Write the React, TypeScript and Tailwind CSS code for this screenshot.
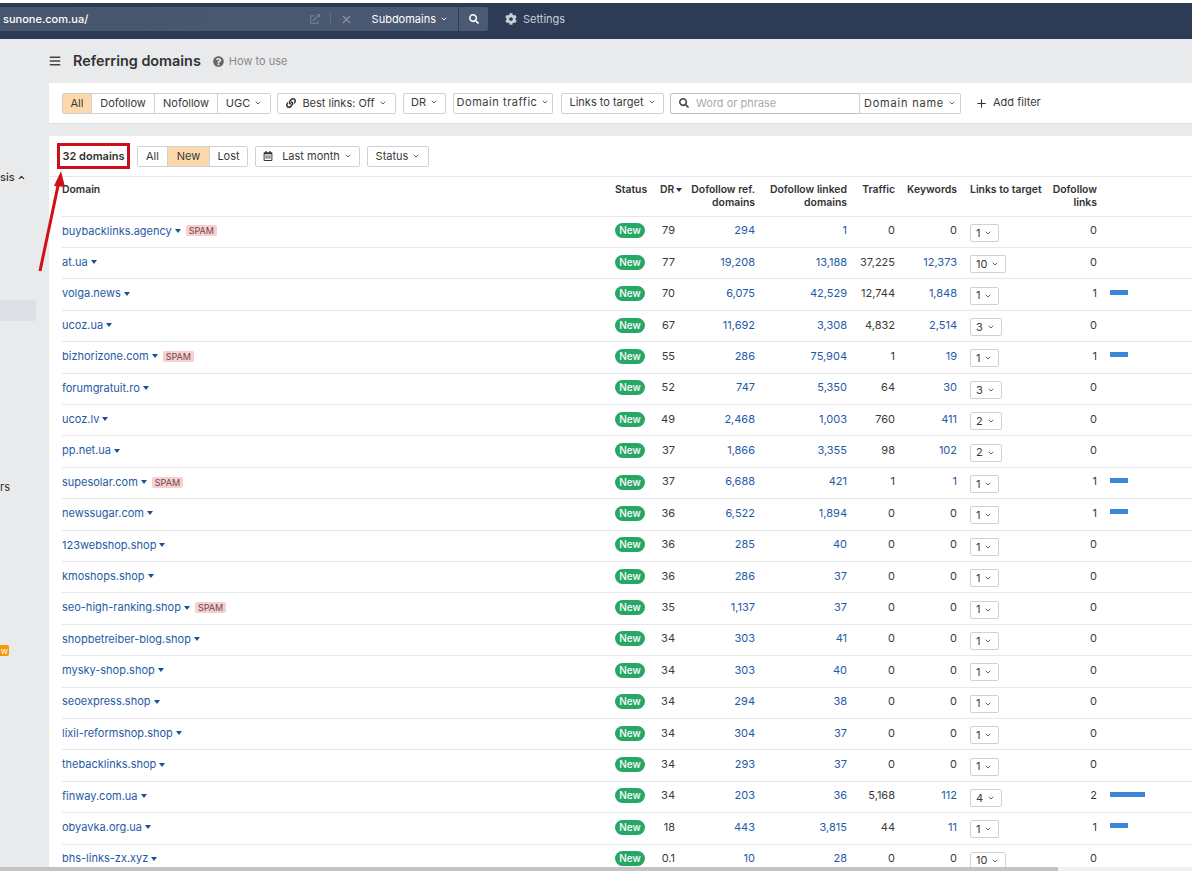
import { ChevronDown, ChevronUp, X, Plus } from "lucide-react";
import { FaCog, FaSearch, FaLink, FaRegCalendarAlt, FaQuestionCircle, FaBars, FaExternalLinkAlt } from "react-icons/fa";

const sans = "font-['Inter','Liberation_Sans',sans-serif]";

type Row = {
  domain: string;
  spam?: boolean;
  dr: string;
  ref: string;
  linked: string;
  traffic: string;
  keywords: string;
  links: string;
  dofollow: string;
  bar?: number;
};

const rows: Row[] = [
  { domain: "buybacklinks.agency", spam: true, dr: "79", ref: "294", linked: "1", traffic: "0", keywords: "0", links: "1", dofollow: "0" },
  { domain: "at.ua", dr: "77", ref: "19,208", linked: "13,188", traffic: "37,225", keywords: "12,373", links: "10", dofollow: "0" },
  { domain: "volga.news", dr: "70", ref: "6,075", linked: "42,529", traffic: "12,744", keywords: "1,848", links: "1", dofollow: "1", bar: 18 },
  { domain: "ucoz.ua", dr: "67", ref: "11,692", linked: "3,308", traffic: "4,832", keywords: "2,514", links: "3", dofollow: "0" },
  { domain: "bizhorizone.com", spam: true, dr: "55", ref: "286", linked: "75,904", traffic: "1", keywords: "19", links: "1", dofollow: "1", bar: 18 },
  { domain: "forumgratuit.ro", dr: "52", ref: "747", linked: "5,350", traffic: "64", keywords: "30", links: "3", dofollow: "0" },
  { domain: "ucoz.lv", dr: "49", ref: "2,468", linked: "1,003", traffic: "760", keywords: "411", links: "2", dofollow: "0" },
  { domain: "pp.net.ua", dr: "37", ref: "1,866", linked: "3,355", traffic: "98", keywords: "102", links: "2", dofollow: "0" },
  { domain: "supesolar.com", spam: true, dr: "37", ref: "6,688", linked: "421", traffic: "1", keywords: "1", links: "1", dofollow: "1", bar: 18 },
  { domain: "newssugar.com", dr: "36", ref: "6,522", linked: "1,894", traffic: "0", keywords: "0", links: "1", dofollow: "1", bar: 18 },
  { domain: "123webshop.shop", dr: "36", ref: "285", linked: "40", traffic: "0", keywords: "0", links: "1", dofollow: "0" },
  { domain: "kmoshops.shop", dr: "36", ref: "286", linked: "37", traffic: "0", keywords: "0", links: "1", dofollow: "0" },
  { domain: "seo-high-ranking.shop", spam: true, dr: "35", ref: "1,137", linked: "37", traffic: "0", keywords: "0", links: "1", dofollow: "0" },
  { domain: "shopbetreiber-blog.shop", dr: "34", ref: "303", linked: "41", traffic: "0", keywords: "0", links: "1", dofollow: "0" },
  { domain: "mysky-shop.shop", dr: "34", ref: "303", linked: "40", traffic: "0", keywords: "0", links: "1", dofollow: "0" },
  { domain: "seoexpress.shop", dr: "34", ref: "294", linked: "38", traffic: "0", keywords: "0", links: "1", dofollow: "0" },
  { domain: "lixil-reformshop.shop", dr: "34", ref: "304", linked: "37", traffic: "0", keywords: "0", links: "1", dofollow: "0" },
  { domain: "thebacklinks.shop", dr: "34", ref: "293", linked: "37", traffic: "0", keywords: "0", links: "1", dofollow: "0" },
  { domain: "finway.com.ua", dr: "34", ref: "203", linked: "36", traffic: "5,168", keywords: "112", links: "4", dofollow: "2", bar: 35 },
  { domain: "obyavka.org.ua", dr: "18", ref: "443", linked: "3,815", traffic: "44", keywords: "11", links: "1", dofollow: "1", bar: 18 },
  { domain: "bhs-links-zx.xyz", dr: "0.1", ref: "10", linked: "28", traffic: "0", keywords: "0", links: "10", dofollow: "0" },
];

const gridCols = "grid grid-cols-[553px_45px_22px_73px_92px_48px_62px_93px_47px_1fr]";

function Chevron() {
  return <ChevronDown size={8} strokeWidth={2.75} className="shrink-0 text-[#555]" />;
}

function Caret() {
  return <span className="ml-[3px] inline-block h-0 w-0 border-x-[3px] border-t-[4px] border-x-transparent border-t-[#1c4f96] align-middle" />;
}

function FilterButton({ children, className = "" }: { children: React.ReactNode; className?: string }) {
  return (
    <button className={`flex h-[21px] items-center justify-center gap-[4px] rounded-[2px] border border-[#cfd1d4] bg-white text-[11px] text-[#3a3a3a] ${className}`}>
      {children}
      <Chevron />
    </button>
  );
}

function SegButton({ children, active, className = "" }: { children: React.ReactNode; active?: boolean; className?: string }) {
  return (
    <span className={`flex h-full items-center justify-center border-r border-[#cfd1d4] last:border-r-0 ${active ? "bg-[#fcd9ab]" : "bg-white"} ${className}`}>
      {children}
    </span>
  );
}

function TableRow({ row }: { row: Row }) {
  return (
    <div className={`${gridCols} h-[31.4px] items-center border-b border-[#e6e7e9] text-[11px] text-[#3a3a3a]`}>
      <div className="flex items-center pb-[2px]">
        <a className="text-[#1f5aa6]">{row.domain}</a>
        <Caret />
        {row.spam && <span className="ml-[5px] rounded-[2px] bg-[#f8cfcf] px-[3px] text-[9px] leading-[11px] text-[#6b4a4a]">SPAM</span>}
      </div>
      <div className="pb-[2px]">
        <span className="flex h-[15px] w-[30px] items-center justify-center rounded-full bg-[#27a765] text-[10px] font-medium text-white">New</span>
      </div>
      <div className="w-[15px] pb-[2.6px] text-right">{row.dr}</div>
      <div className="pb-[2.6px] text-right text-[#1f5aa6]">{row.ref}</div>
      <div className="pb-[2.6px] text-right text-[#1f5aa6]">{row.linked}</div>
      <div className="pb-[2.6px] text-right">{row.traffic}</div>
      <div className={`pb-[2.6px] text-right ${row.keywords === "0" ? "" : "text-[#1f5aa6]"}`}>{row.keywords}</div>
      <div className="pl-[13px] pt-[2px]">
        <span className="inline-flex h-[18px] items-center gap-[4px] rounded-[2px] border border-[#cfd1d4] bg-white pl-[5px] pr-[6px]">
          {row.links}
          <Chevron />
        </span>
      </div>
      <div className="pb-[2.6px] text-right">{row.dofollow}</div>
      <div className="pl-[13px]">
        {row.bar ? <div className="mb-[5px] h-[5px] bg-[#3a86d8]" style={{ width: row.bar }} /> : null}
      </div>
    </div>
  );
}

export default function App() {
  return (
    <div className={`relative flex h-[871px] w-[1192px] flex-col overflow-hidden bg-[#e9eaec] ${sans}`}>
      <div className="h-[3px] shrink-0 bg-white" />

      {/* top bar */}
      <header className="flex h-[36px] shrink-0 items-start bg-[#2d3b55] pt-[4px]">
        <div className="flex h-[24px] w-[458px] items-center bg-gradient-to-r from-[#47556d] to-[#4b5a72] pl-[3px] text-[11px] font-medium text-white">
          <span className="flex-1">sunone.com.ua/</span>
          <FaExternalLinkAlt size={10} className="mr-[10px] text-[#6f7d94]" />
          <span className="mr-[9px] h-[12px] w-px bg-[#5f6d84]" />
          <X size={13} className="mr-[19px] text-[#8c97a8]" />
          <span className="flex items-center gap-[4px] pr-[10px] text-[11px] font-normal">
            Subdomains
            <ChevronDown size={8} strokeWidth={2.75} />
          </span>
        </div>
        <div className="ml-px flex h-[24px] w-[29px] items-center justify-center rounded-r-[2px] bg-[#4b5a72]">
          <FaSearch size={10} className="text-white" />
        </div>
        <div className="flex h-[24px] items-center">
          <FaCog size={12} className="ml-[17px] text-[#c9ced7]" />
          <span className="ml-[6px] text-[11px] text-[#c9ced7]">Settings</span>
        </div>
      </header>

      <div className="flex min-h-0 flex-1">
        {/* what is visible of the sidebar at the left edge */}
        <aside className="relative w-[49px] shrink-0 text-[11px] text-[#333]">
          <span className="absolute left-0 top-[130px] flex items-center gap-[2px] font-medium">
            sis
            <ChevronUp size={9} strokeWidth={3} />
          </span>
          <div className="absolute left-0 top-[261px] h-[21px] w-[36px] rounded-r-[2px] bg-[#dcdfe4]" />
          <span className="absolute left-0 top-[440px]">rs</span>
          <span className="absolute left-0 top-[606px] w-[9px] rounded-r-[2px] bg-[#f59a0b] text-center text-[9px] leading-[11px] text-white">w</span>
        </aside>

        <main className="flex min-w-0 flex-1 flex-col">
          <div className="flex h-[44px] shrink-0 items-center">
            <FaBars size={12} className="text-[#444]" />
            <h1 className="ml-[12px] text-[14.4px] font-semibold text-[#333]">Referring domains</h1>
            <FaQuestionCircle size={11} className="ml-[12px] text-[#666]" />
            <span className="ml-[5px] text-[11px] text-[#888]">How to use</span>
          </div>

          {/* filters */}
          <section className="flex h-[41px] shrink-0 items-center border-b border-[#dddfe2] bg-white pl-[13px] text-[11px] text-[#3a3a3a]">
            <div className="flex h-[21px] items-center overflow-hidden rounded-[2px] border border-[#cfd1d4]">
              <SegButton active className="w-[29px]">All</SegButton>
              <SegButton className="w-[63px]">Dofollow</SegButton>
              <SegButton className="w-[63px]">Nofollow</SegButton>
              <SegButton className="w-[52px] gap-[4px]">
                UGC
                <Chevron />
              </SegButton>
            </div>
            <FilterButton className="ml-[6px] w-[119px]">
              <FaLink size={10} className="text-[#333]" />
              <span className="ml-[2px]">Best links: Off</span>
            </FilterButton>
            <FilterButton className="ml-[7px] w-[43px] pb-[2px]">DR</FilterButton>
            <FilterButton className="ml-[7px] w-[100px] pb-[2px]">
              <span className="tracking-[0.55px]">Domain traffic</span>
            </FilterButton>
            <FilterButton className="ml-[8px] w-[103px] pb-[2px]">Links to target</FilterButton>
            <div className="ml-[6px] flex h-[21px] w-[190px] items-center gap-[7px] rounded-l-[2px] border border-[#bfc1c4] pl-[8px] text-[#aaa]">
              <FaSearch size={10} className="text-[#444]" />
              Word or phrase
            </div>
            <FilterButton className="ml-[-1px] w-[102px]">
              <span className="tracking-[0.8px]">Domain name</span>
            </FilterButton>
            <Plus size={13} strokeWidth={2} className="ml-[14px] text-[#333]" />
            <span className="ml-[5px] pb-[2px]">Add filter</span>
          </section>

          <div className="h-[12px] shrink-0" />

          {/* table panel */}
          <section className="min-h-0 flex-1 overflow-hidden bg-white text-[11px] text-[#3a3a3a]">
            <div className="flex h-[41px] items-center border-b border-[#e6e7e9] pl-[8px]">
              <div className="flex h-[26px] w-[73px] items-center justify-center border-[3px] border-[#cc0f1c] font-semibold text-[#333]">32 domains</div>
              <div className="ml-[7px] flex h-[21px] items-center overflow-hidden rounded-[2px] border border-[#cfd1d4]">
                <SegButton className="w-[30px]">All</SegButton>
                <SegButton active className="w-[42px]">New</SegButton>
                <SegButton className="w-[37px]">Lost</SegButton>
              </div>
              <FilterButton className="ml-[7px] w-[105px]">
                <FaRegCalendarAlt size={10} className="mr-[5px] text-[#333]" />
                Last month
              </FilterButton>
              <FilterButton className="ml-[7px] w-[62px]">Status</FilterButton>
            </div>

            <div className="pl-[13px]">
              <div className={`${gridCols} h-[39.7px] items-start border-b border-[#e6e7e9] pt-[6px] text-[10.4px] font-semibold leading-[13px] text-[#333]`}>
                <div>Domain</div>
                <div>Status</div>
                <div className="flex items-center whitespace-nowrap">
                  DR
                  <span className="ml-[2px] inline-block h-0 w-0 border-x-[3px] border-t-[4px] border-x-transparent border-t-[#333]" />
                </div>
                <div className="text-right">Dofollow ref.<br />domains</div>
                <div className="text-right">Dofollow linked<br />domains</div>
                <div className="text-right">Traffic</div>
                <div className="text-right">Keywords</div>
                <div className="whitespace-nowrap pl-[13px]">Links to target</div>
                <div className="text-right">Dofollow<br />links</div>
                <div />
              </div>
              {rows.map((row) => (
                <TableRow key={row.domain} row={row} />
              ))}
            </div>
          </section>
        </main>
      </div>

      {/* annotation arrow */}
      <svg className="pointer-events-none absolute left-[35px] top-[165px]" width="40" height="110" viewBox="0 0 40 110">
        <path d="M5 106 L24 16" stroke="#d0101a" strokeWidth="3" fill="none" />
        <path d="M26 6 L19 21 L30 22 Z" fill="#d0101a" />
      </svg>

      {/* horizontal scrollbar */}
      <div className="absolute bottom-0 left-0 h-[4px] w-full bg-[#f1f1f1]">
        <div className="h-full w-[1058px] bg-[#c4c4c4]" />
      </div>
    </div>
  );
}
